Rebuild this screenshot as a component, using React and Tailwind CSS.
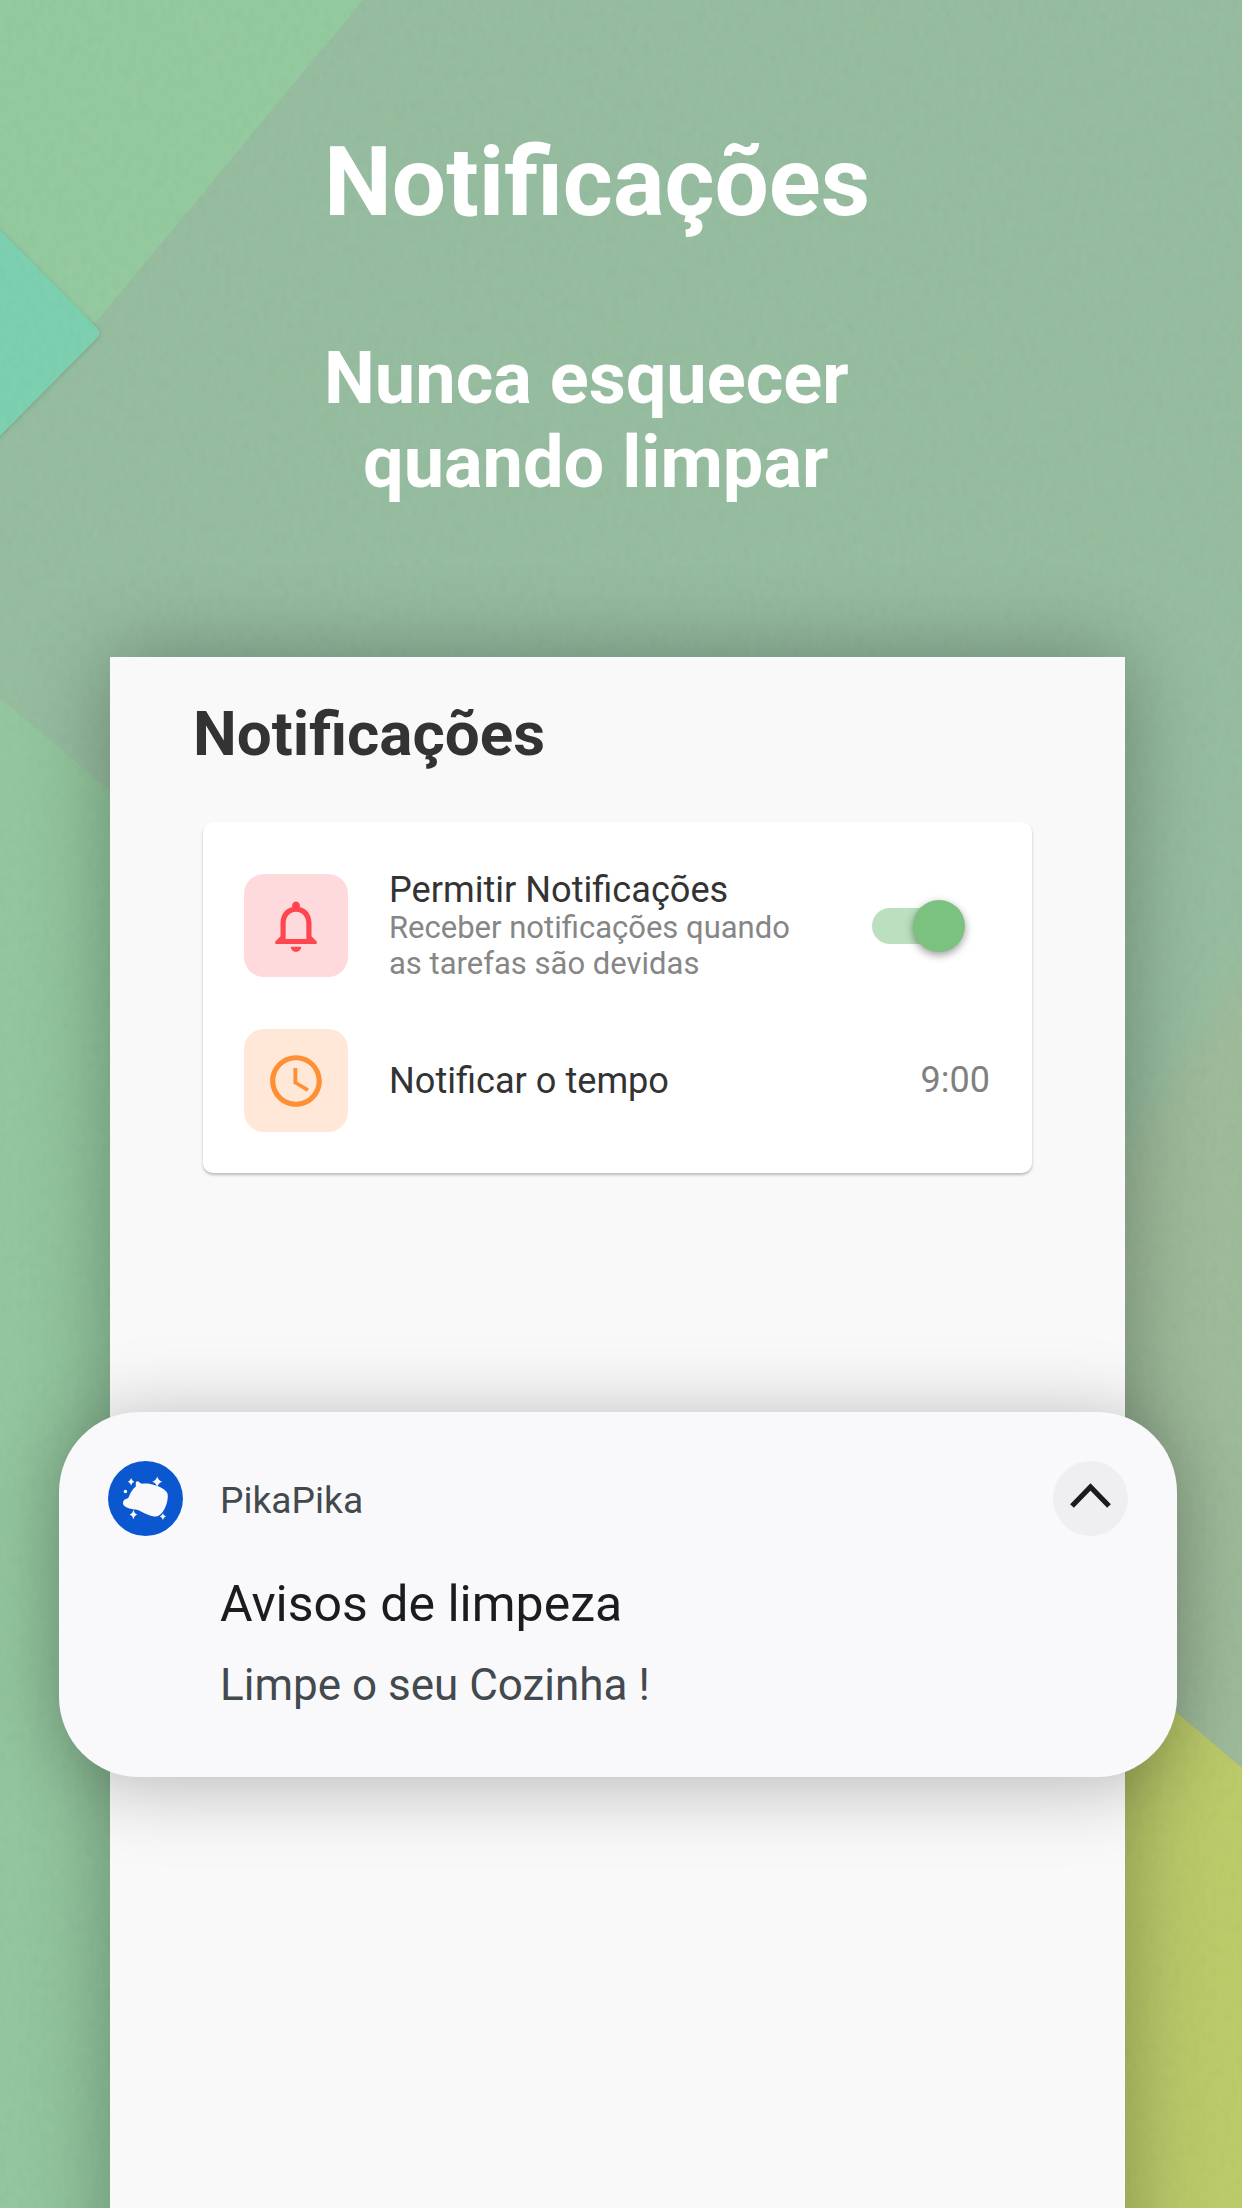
import clsx from "clsx";

const BellIcon = () => (
  <svg viewBox="0 0 24 24" className="size-[62px] fill-[#ff454f]">
    <path d="M12 22c1.1 0 2-.9 2-2h-4c0 1.1.9 2 2 2zm6-6v-5c0-3.07-1.63-5.64-4.5-6.32V4c0-.83-.67-1.5-1.5-1.5s-1.5.67-1.5 1.5v.68C7.64 5.36 6 7.92 6 11v5l-2 2v1h16v-1l-2-2zm-2 1H8v-6c0-2.48 1.51-4.5 4-4.5s4 2.02 4 4.5v6z" />
  </svg>
);

const ClockIcon = () => (
  <svg viewBox="0 0 24 24" className="size-[62px] fill-[#ff8f34]">
    <path d="M11.99 2C6.47 2 2 6.48 2 12s4.47 10 9.99 10C17.52 22 22 17.52 22 12S17.52 2 11.99 2zM12 20c-4.42 0-8-3.58-8-8s3.58-8 8-8 8 3.58 8 8-3.58 8-8 8z" />
    <path d="M12.5 7H11v6l5.25 3.15.75-1.23-4.5-2.67z" />
  </svg>
);

const AppLogo = () => (
  <svg viewBox="0 0 224 224" className="size-[75px]">
    <circle cx="112" cy="112" r="112" fill="#0b57d0" />
    <path
      fill="#f9f9fc"
      d="M83 64c3-5 8-4 11 0l7 4c12-2 26-1 38 4 14 4 28 11 35 19 7 8 5 20 2 33-4 15-11 30-22 37-10 7-24 5-36-1-12-5-24-13-35-15-12-1-28-4-36-13-4-6-2-16 5-18 6-2 9-3 11-9 4-11 12-23 20-29z"
    />
    <g fill="#f9f9fc">
      <path d="M147 46q3 12 15 16-12 4-15 16-3-12-15-16 12-4 15-16z" />
      <path d="M76 146q2 10 11 14-9 4-11 14-2-10-11-14 9-4 11-14z" />
      <path d="M69 51q2 8 9 11-7 3-9 11-2-8-9-11 7-3 9-11z" />
      <path d="M164 156q2 7 9 10-7 3-9 10-2-7-9-10 7-3 9-10z" />
      <circle cx="52" cy="91" r="5" />
    </g>
  </svg>
);

// layered paper sheets
const PaperBackground = () => (
  <svg
    viewBox="0 0 1242 2208"
    preserveAspectRatio="none"
    className="absolute inset-0 h-full w-full"
  >
    <defs>
      <filter id="edge" x="-20%" y="-20%" width="140%" height="140%">
        <feDropShadow dx="0" dy="1" stdDeviation="2" floodColor="#4f7f62" floodOpacity="0.5" />
      </filter>
      <filter id="soft" x="-20%" y="-20%" width="140%" height="140%">
        <feGaussianBlur stdDeviation="16" />
      </filter>
      <filter id="grain" x="0" y="0" width="100%" height="100%">
        <feTurbulence type="fractalNoise" baseFrequency="0.16 0.09" numOctaves="3" seed="4" />
        <feColorMatrix type="saturate" values="0.6" />
        <feComponentTransfer>
          <feFuncA type="linear" slope="0" intercept="1" />
        </feComponentTransfer>
      </filter>
    </defs>
    <rect width="1242" height="2208" fill="#94bc9e" />
    <polygon points="1300,880 1060,1250 1060,1800 1300,1800" fill="#9cba98" filter="url(#soft)" />
    <polygon points="0,0 363,0 96,322 0,322" fill="#92ca9d" />
    <polygon points="0,698 400,1036 400,2208 0,2208" fill="#91c79d" />
    <path d="M-10 220L97 328q5 5 0 10L-10 446z" fill="#7ad0b0" filter="url(#edge)" />
    <polygon points="1000,1563 1242,1768 1242,2208 1000,2208" fill="#bbcb66" />
    <rect width="1242" height="2208" filter="url(#grain)" opacity="0.045" />
  </svg>
);

const settings = [
  {
    title: "Permitir Notificações",
    description: ["Receber notificações quando", "as tarefas são devidas"],
    icon: <BellIcon />,
    color: "bg-[#ffdadd]",
    toggle: true,
  },
  {
    title: "Notificar o tempo",
    icon: <ClockIcon />,
    color: "bg-[#ffe8d7]",
    value: "9:00",
  },
];

const Toggle = () => (
  <button className="mr-[25px] flex h-[52px] w-[93px] items-center">
    <span className="flex h-9 w-[88px] items-center justify-end rounded-full bg-[#bce0bf]">
      <span className="-mr-[5px] size-[52px] shrink-0 rounded-full bg-[#7bc17f] shadow-[0_3px_8px_rgba(0,0,0,0.4)]" />
    </span>
  </button>
);

const SettingRow = ({ item }) => (
  <div className="flex h-[103px] items-center">
    <div
      className={clsx(
        "flex h-[103px] w-[104px] shrink-0 items-center justify-center rounded-[20px]",
        item.color
      )}
    >
      {item.icon}
    </div>
    <div className="ml-[41px] flex-1 whitespace-nowrap">
      <p className="text-[36.15px] leading-[41px] text-[#333]">{item.title}</p>
      {item.description && (
        <p className="text-[31px] leading-9 text-[#868686]">
          {item.description[0]}
          <br />
          {item.description[1]}
        </p>
      )}
    </div>
    {item.toggle ? (
      <Toggle />
    ) : (
      <span className="text-[36px] leading-[41px] text-[#808080]">{item.value}</span>
    )}
  </div>
);

const NotificationCard = () => (
  <div className="absolute top-[1412px] left-[59px] flex h-[365px] w-[1118px] rounded-[80px] bg-[#f9f9fc] pt-[49px] pl-[49px] shadow-[0_8px_80px_rgba(0,0,0,0.27)]">
    <AppLogo />
    <div className="ml-[37px] flex-1 whitespace-nowrap">
      <p className="mt-[17px] text-[37.2px] leading-[44px] text-[#43494d]">PikaPika</p>
      <h2 className="mt-[52px] text-[50px] leading-[60px] text-[#1a1c1e]">
        Avisos de limpeza
      </h2>
      <p className="mt-[25px] text-[44px] leading-[52px] text-[#43494d]">
        Limpe o seu Cozinha !
      </p>
    </div>
    <button className="mr-[49px] flex size-[75px] items-center justify-center rounded-full bg-[#efeff1]">
      <svg viewBox="0 0 75 75" className="size-[75px]">
        <path d="M19 45L37.5 26 56 45" fill="none" stroke="#1a1c1e" strokeWidth="5.2" />
      </svg>
    </button>
  </div>
);

const App = () => {
  return (
    <div className="relative h-[2208px] w-[1242px] overflow-hidden font-[Roboto,sans-serif]">
      <PaperBackground />

      <div className="relative flex h-full flex-col">
        <header className="h-[657px] shrink-0 whitespace-nowrap pt-[125px] pl-[324px] font-bold text-white">
          <h1 className="text-[96.2px] leading-[114px]">Notificações</h1>
          <p className="mt-[98px] text-[72.1px] leading-[84px]">
            Nunca esquecer
            <br />
            <span className="ml-[39px]">quando limpar</span>
          </p>
        </header>

        {/* runs past the bottom of the screen */}
        <main className="-mb-[120px] ml-[110px] w-[1015px] flex-1 bg-[#f9f9f9] shadow-[0_0_80px_rgba(0,0,0,0.3)]">
          <h2 className="pt-[39px] pl-[83px] text-[62px] leading-[76px] font-bold text-[#333]">
            Notificações
          </h2>
          <section className="mt-[50px] ml-[93px] flex w-[829px] flex-col gap-[52px] rounded-[10px] bg-white pt-[52px] pr-[42px] pb-[41px] pl-[41px] shadow-[0_2px_3px_rgba(0,0,0,0.25)]">
            {settings.map((item) => (
              <SettingRow key={item.title} item={item} />
            ))}
          </section>
        </main>
      </div>

      <NotificationCard />
    </div>
  );
};

export default App;
